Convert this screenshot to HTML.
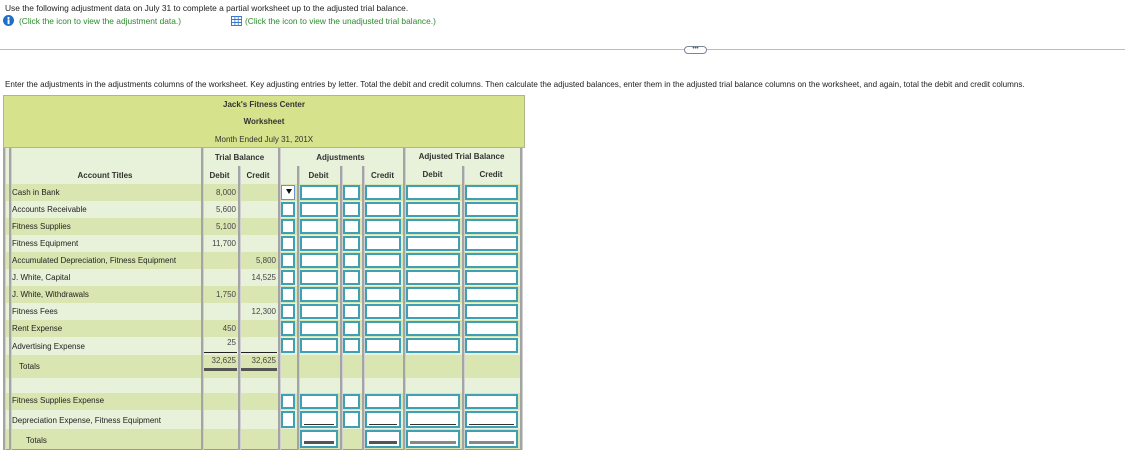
<!DOCTYPE html>
<html><head><meta charset="utf-8"><style>
body{margin:0;width:1125px;height:461px;background:#fff;font-family:"Liberation Sans",Arial,sans-serif;color:#222;position:relative;overflow:hidden}
.a{position:absolute;white-space:nowrap}
.t{font-size:8px;line-height:10px}
.g{color:#2a8a2a}
.b{font-weight:bold}
.r{text-align:right}
.c{text-align:center}
.box{position:absolute;background:#fff;border:2px solid #3f9fb4;box-sizing:border-box}
.vl{position:absolute;width:2px;background:#a4a4a4;border-right:1px solid #d0d0d0}
</style></head><body>
<div class="a t" style="left:5px;top:3px;font-size:8.4px">Use the following adjustment data on July 31 to complete a partial worksheet up to the adjusted trial balance.</div>
<svg class="a" style="left:3px;top:15px" width="11" height="11"><circle cx="5.5" cy="5.5" r="5.5" fill="#1f6fc8"/><rect x="4.6" y="4.5" width="1.9" height="4.6" fill="#fff"/><circle cx="5.5" cy="3" r="1.1" fill="#fff"/></svg>
<div class="a t g" style="left:19px;top:16px;font-size:8.4px">(Click the icon to view the adjustment data.)</div>
<svg class="a" style="left:231px;top:16px" width="11" height="10"><rect x="0" y="0" width="11" height="10" fill="#3a78d0"/><g fill="#fff"><rect x="1" y="1" width="2.5" height="2"/><rect x="4.3" y="1" width="2.5" height="2"/><rect x="7.6" y="1" width="2.5" height="2"/><rect x="1" y="4" width="2.5" height="2"/><rect x="4.3" y="4" width="2.5" height="2"/><rect x="7.6" y="4" width="2.5" height="2"/><rect x="1" y="7" width="2.5" height="2"/><rect x="4.3" y="7" width="2.5" height="2"/><rect x="7.6" y="7" width="2.5" height="2"/></g></svg>
<div class="a t g" style="left:245px;top:16px;font-size:8.4px">(Click the icon to view the unadjusted trial balance.)</div>
<div class="a" style="left:0;top:49px;width:1125px;height:1px;background:#b8bcc4"></div>
<div class="a" style="left:684px;top:46px;width:21px;height:6px;background:#fff;border:1px solid #7c8796;border-radius:4px;font-size:6px;line-height:5px;text-align:center;color:#556;letter-spacing:0px">&#8226;&#8226;&#8226;</div>
<div class="a t" style="left:5px;top:80px;font-size:8.1px">Enter the adjustments in the adjustments columns of the worksheet. Key adjusting entries by letter. Total the debit and credit columns. Then calculate the adjusted balances, enter them in the adjusted trial balance columns on the worksheet, and again, total the debit and credit columns.</div>

<div class="a" style="left:3px;top:95px;width:522px;height:53px;background:#d6e28c;border:1px solid #aab88a;box-sizing:border-box"></div>
<div class="a t b c" style="left:3px;width:522px;top:100px;color:#333">Jack's Fitness Center</div>
<div class="a t b c" style="left:3px;width:522px;top:117px;color:#333">Worksheet</div>
<div class="a t c" style="left:3px;width:522px;top:135px;color:#333">Month Ended July 31, 201X</div>

<div id="tbl"></div>

<div class="a t b c" style="left:201px;width:77px;top:153px;color:#333">Trial Balance</div>
<div class="a t b c" style="left:278px;width:125px;top:153px;color:#333">Adjustments</div>
<div class="a t b c" style="left:403px;width:117px;top:152px;color:#333">Adjusted Trial Balance</div>
<div class="a t b c" style="left:9px;width:192px;top:171px;color:#333">Account Titles</div>
<div class="a t b c" style="left:201px;width:37px;top:171px;color:#333">Debit</div>
<div class="a t b c" style="left:238px;width:40px;top:171px;color:#333">Credit</div>
<div class="a t b c" style="left:297px;width:43px;top:171px;color:#333">Debit</div>
<div class="a t b c" style="left:362px;width:41px;top:171px;color:#333">Credit</div>
<div class="a t b c" style="left:403px;width:59px;top:170px;color:#333">Debit</div>
<div class="a t b c" style="left:462px;width:58px;top:170px;color:#333">Credit</div>

<div class="a t" style="left:12px;top:188px">Cash in Bank</div>
<div class="a t" style="left:12px;top:205px">Accounts Receivable</div>
<div class="a t" style="left:12px;top:222px">Fitness Supplies</div>
<div class="a t" style="left:12px;top:239px">Fitness Equipment</div>
<div class="a t" style="left:12px;top:256px">Accumulated Depreciation, Fitness Equipment</div>
<div class="a t" style="left:12px;top:273px">J. White, Capital</div>
<div class="a t" style="left:12px;top:290px">J. White, Withdrawals</div>
<div class="a t" style="left:12px;top:307px">Fitness Fees</div>
<div class="a t" style="left:12px;top:324px">Rent Expense</div>
<div class="a t" style="left:12px;top:342px">Advertising Expense</div>
<div class="a t" style="left:19px;top:362px">Totals</div>
<div class="a t" style="left:12px;top:396px">Fitness Supplies Expense</div>
<div class="a t" style="left:12px;top:416px">Depreciation Expense, Fitness Equipment</div>
<div class="a t" style="left:26px;top:436px">Totals</div>

<div class="a t r" style="left:201px;width:35px;top:188px;color:#444">8,000</div>
<div class="a t r" style="left:201px;width:35px;top:205px;color:#444">5,600</div>
<div class="a t r" style="left:201px;width:35px;top:222px;color:#444">5,100</div>
<div class="a t r" style="left:201px;width:35px;top:239px;color:#444">11,700</div>
<div class="a t r" style="left:238px;width:38px;top:256px;color:#444">5,800</div>
<div class="a t r" style="left:238px;width:38px;top:273px;color:#444">14,525</div>
<div class="a t r" style="left:201px;width:35px;top:290px;color:#444">1,750</div>
<div class="a t r" style="left:238px;width:38px;top:307px;color:#444">12,300</div>
<div class="a t r" style="left:201px;width:35px;top:324px;color:#444">450</div>
<div class="a t r" style="left:201px;width:35px;top:338px;color:#444">25</div>
<div class="a t r" style="left:201px;width:35px;top:356px;color:#444">32,625</div>
<div class="a t r" style="left:238px;width:38px;top:356px;color:#444">32,625</div>

<script>
var T=document.getElementById('tbl');
function d(s){var e=document.createElement('div');e.className='a';e.style.cssText=s;T.appendChild(e);return e;}
// rows
var rows=[[148,18,'#e8f1d9'],[166,18,'#e8f1d9']];
for(var i=0;i<10;i++)rows.push([184+17*i,i==9?18:17,i%2==0?'#d9e6b1':'#e8f1d9']);
rows.push([355,23,'#d9e6b1']);rows.push([378,15,'#e8f1d9']);rows.push([393,17,'#d9e6b1']);rows.push([410,19,'#e8f1d9']);rows.push([429,20,'#d9e6b1']);
rows.forEach(function(r){d('left:3px;top:'+r[0]+'px;width:517px;height:'+r[1]+'px;background:'+r[2]);});
d('left:3px;top:449px;width:517px;height:1px;background:#999');
// vertical lines
function vl(x,y1,y2){var e=d('top:'+y1+'px;left:'+x+'px;height:'+(y2-y1)+'px;');e.className='vl';}
[3,9,201,278,403,520].forEach(function(x){vl(x,148,450);});
[238,297,340,362,462].forEach(function(x){vl(x,166,450);});
// boxes
var cols=[[281,297],[300,340],[343,362],[365,403],[406,462],[465,520]];
function bx(x1,x2,y,h){var e=document.createElement('div');e.className='box';e.style.cssText='left:'+x1+'px;top:'+y+'px;width:'+(x2-x1-2)+'px;height:'+h+'px';T.appendChild(e);return e;}
for(var i=0;i<10;i++){cols.forEach(function(c,j){var b=bx(c[0],c[1],185+17*i,15);if(i==0&&j==0){b.style.borderColor='#6c8fd0';b.style.borderWidth='1px';b.innerHTML='<div style="position:absolute;right:2px;top:3px;width:0;height:0;border-left:3px solid transparent;border-right:3px solid transparent;border-top:5px solid #111"></div>';}});}
cols.forEach(function(c){bx(c[0],c[1],394,15);});
cols.forEach(function(c,j){var b=bx(c[0],c[1],411,17);if(j!=0&&j!=2){var u=document.createElement('div');u.style.cssText='position:absolute;left:2px;right:2px;bottom:1px;height:1px;background:#333';b.appendChild(u);}});
[1,3,4,5].forEach(function(j){var c=cols[j];var b=bx(c[0],c[1],430,18);var u=document.createElement('div');u.style.cssText='position:absolute;left:2px;right:2px;bottom:2px;height:3px;background:'+(j>3?'#888':'#555');b.appendChild(u);});
// underlines TB
d('left:204px;top:352px;width:33px;height:1px;background:#222');
d('left:241px;top:352px;width:36px;height:1px;background:#222');
d('left:204px;top:368px;width:33px;height:3px;background:#555');
d('left:241px;top:368px;width:36px;height:3px;background:#555');
</script>
</body></html>
